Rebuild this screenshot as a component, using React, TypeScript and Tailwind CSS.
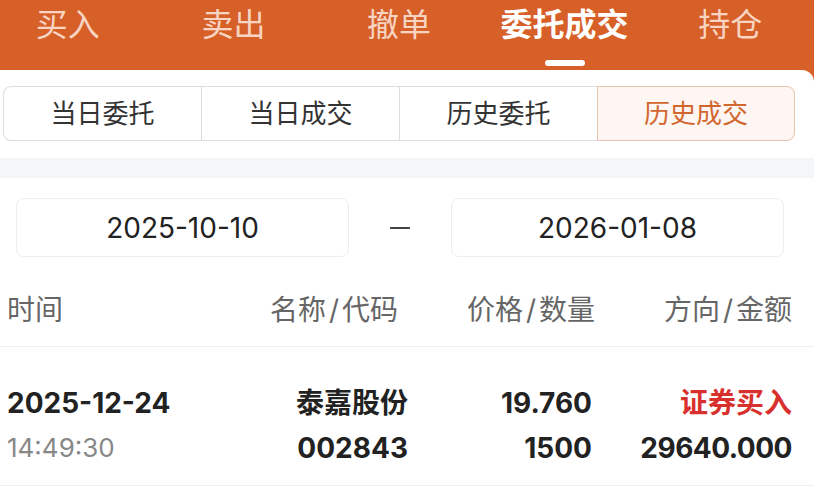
import React from "react";

const FONT = { fontFamily: 'Inter, "Noto Sans CJK SC", sans-serif' };

const navItems = ["买入", "卖出", "撤单", "委托成交", "持仓"];
const tabs = ["当日委托", "当日成交", "历史委托", "历史成交"];

function Slash({ a, b }: { a: string; b: string }) {
  return (
    <>
      {a}
      <span className="px-[3px]">/</span>
      {b}
    </>
  );
}

export default function App() {
  return (
    <div className="w-[814px] h-[494px] overflow-hidden bg-[#D75F28]" style={FONT}>
      {/* top nav */}
      <div className="h-[70px] overflow-hidden">
        <div className="-ml-[15px] w-[828px] grid grid-cols-5">
          {navItems.map((t, i) => {
            const active = i === 3;
            return (
              <div key={t} className="flex flex-col items-center pt-[9px]">
                <div
                  className={
                    active
                      ? "text-[32px] leading-[32px] font-bold text-white"
                      : "text-[32px] leading-[32px] text-[#F8D5C2]"
                  }
                >
                  {t}
                </div>
                {active && <div className="mt-[19px] h-[6px] w-[40px] rounded-full bg-white" />}
              </div>
            );
          })}
        </div>
      </div>

      {/* white panel */}
      <div className="bg-white rounded-tr-[12px] h-[424px]">
        <div className="pt-[16px] px-[3px] flex">
          {tabs.map((t, i) => {
            const active = i === 3;
            let cls =
              "w-[198px] h-[55px] flex items-center justify-center text-[26px] ";
            if (active) {
              cls += "border border-[#E7C2AD] bg-[#FDF6F2] text-[#D2662F] rounded-r-[8px]";
            } else if (i === 0) {
              cls += "border-y border-l border-[#DDDDDD] text-[#333333] rounded-l-[8px]";
            } else {
              cls += "border-y border-l border-[#DDDDDD] text-[#333333]";
            }
            return (
              <div key={t} className={cls}>
                {t}
              </div>
            );
          })}
        </div>

        <div className="mt-[17px] h-[20px] bg-[#F5F6F8]" />

        {/* date row */}
        <div className="mt-[20px] px-[16px] flex items-center justify-between w-[800px]">
          <div className="w-[333px] h-[59px] border border-[#EEEEEE] rounded-[8px] flex items-center justify-center text-[28px] text-[#222222]">
            2025-10-10
          </div>
          <div className="w-[20px] h-[2px] bg-[#444444]" />
          <div className="w-[333px] h-[59px] border border-[#EEEEEE] rounded-[8px] flex items-center justify-center text-[28px] text-[#222222]">
            2026-01-08
          </div>
        </div>

        {/* header */}
        <div className="pt-[38px] pb-[21px] border-b border-[#EEEEEE]">
          <div className="pl-[7px] grid grid-cols-[223px_178px_184px_200px] text-[28px] leading-[30px] text-[#666666]">
            <div>时间</div>
            <div className="text-right pr-[10px]">
              <Slash a="名称" b="代码" />
            </div>
            <div className="text-right -mr-[3px]">
              <Slash a="价格" b="数量" />
            </div>
            <div className="text-right">
              <Slash a="方向" b="金额" />
            </div>
          </div>
        </div>

        {/* data row */}
        <div className="pt-[41px] pb-[22px] border-b border-[#EEEEEE]">
          <div className="pl-[7px] grid grid-cols-[223px_178px_184px_200px] text-[28px] leading-[30px] text-[#222222] font-bold">
            <div>2025-12-24</div>
            <div className="text-right">泰嘉股份</div>
            <div className="text-right">19.760</div>
            <div className="text-right text-[#D8302C]">证券买入</div>
          </div>
          <div className="mt-[15px] pl-[7px] grid grid-cols-[223px_178px_184px_200px] text-[28px] leading-[30px] text-[#222222] font-bold">
            <div className="font-normal text-[26px] text-[#888888]">14:49:30</div>
            <div className="text-right">002843</div>
            <div className="text-right">1500</div>
            <div className="text-right tracking-[-0.5px]">29640.000</div>
          </div>
        </div>
      </div>
    </div>
  );
}
